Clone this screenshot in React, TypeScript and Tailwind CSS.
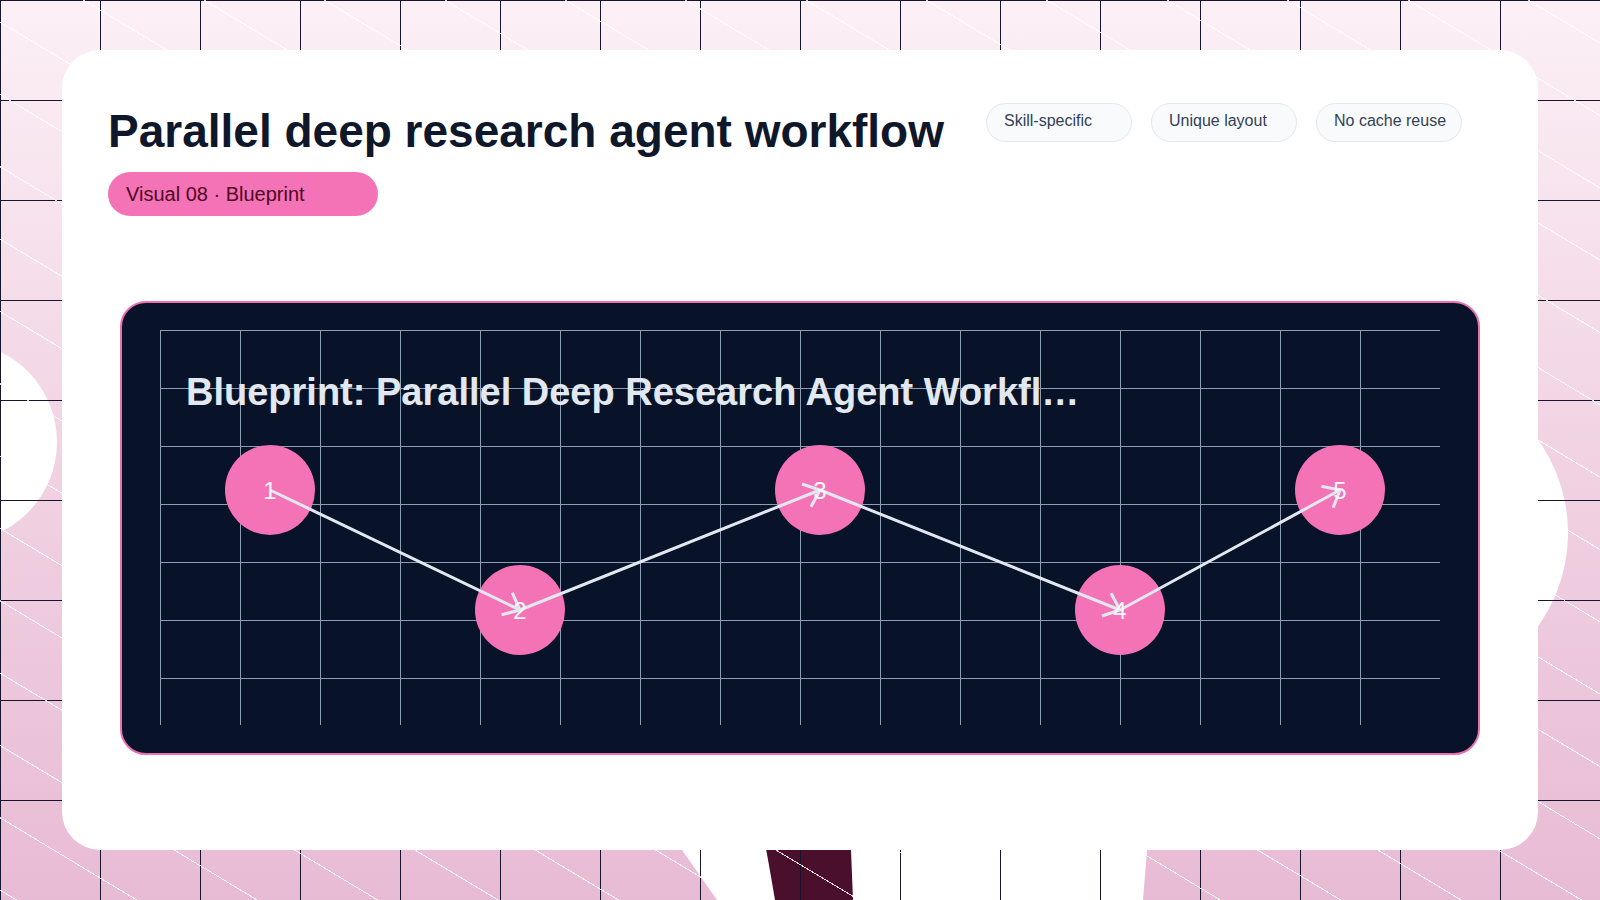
const TAGS = ['Skill-specific', 'Unique layout', 'No cache reuse']

type Node = { id: number; x: number; y: number }

const NODES: Node[] = [
  { id: 1, x: 110, y: 160 },
  { id: 2, x: 360, y: 280 },
  { id: 3, x: 660, y: 160 },
  { id: 4, x: 960, y: 280 },
  { id: 5, x: 1180, y: 160 }
]

const GRID_W = 1280
const GRID_H = 395

/**
 * Open chevron at the end of an edge, tip sits on the target centre
 */
function arrowPoints(from: Node, to: Node): string {
  const back = Math.atan2(to.y - from.y, to.x - from.x) + Math.PI
  const len = 19
  const spread = 0.7
  const a = [to.x + len * Math.cos(back + spread), to.y + len * Math.sin(back + spread)]
  const b = [to.x + len * Math.cos(back - spread), to.y + len * Math.sin(back - spread)]
  return `${a[0]},${a[1]} ${to.x},${to.y} ${b[0]},${b[1]}`
}

function Blueprint() {
  const cols = Array.from({ length: GRID_W / 80 + 1 }, (_, i) => i * 80)
  const rows = Array.from({ length: 7 }, (_, i) => i * 58)

  return (
    <svg width={GRID_W} height={GRID_H} viewBox={`0 0 ${GRID_W} ${GRID_H}`} className="block">
      {/* blueprint grid */}
      <g stroke="#8e9db6" strokeWidth="1">
        {cols.map((x) => (
          <line key={`c${x}`} x1={x + 0.5} y1={0} x2={x + 0.5} y2={GRID_H} />
        ))}
        {rows.map((y) => (
          <line key={`r${y}`} x1={0} y1={y + 0.5} x2={GRID_W} y2={y + 0.5} />
        ))}
      </g>

      <text
        x={26}
        y={75}
        fill="#e2e8f0"
        fontSize="38"
        fontWeight="700"
        fontFamily="'Liberation Sans', Arial, sans-serif"
      >
        Blueprint: Parallel Deep Research Agent Workfl…
      </text>

      {NODES.map((n) => (
        <circle key={`n${n.id}`} cx={n.x} cy={n.y} r={45} fill="#f472b6" />
      ))}

      {/* edges */}
      <g stroke="#e2e8f0" strokeWidth="3" fill="none">
        {NODES.slice(1).map((to, i) => {
          const from = NODES[i]
          return (
            <g key={`e${to.id}`}>
              <line x1={from.x} y1={from.y} x2={to.x} y2={to.y} />
              <polyline points={arrowPoints(from, to)} />
            </g>
          )
        })}
      </g>

      {NODES.map((n) => (
        <text
          key={`t${n.id}`}
          x={n.x}
          y={n.y}
          fill="#f8fafc"
          fontSize="24"
          textAnchor="middle"
          dominantBaseline="central"
          fontFamily="'Liberation Sans', Arial, sans-serif"
        >
          {n.id}
        </text>
      ))}
    </svg>
  )
}

function Backdrop() {
  return (
    <>
      {/* soft shapes behind the card */}
      <svg className="absolute inset-0 h-full w-full" viewBox="0 0 1600 900" preserveAspectRatio="none">
        <circle cx={-43} cy={442} r={100} fill="#ffffff" />
        <circle cx={1408} cy={533} r={160} fill="#ffffff" />
        <polygon points="612,750 717,900 1143,900 1155,750" fill="#ffffff" />
        <path d="M757,800 Q768,858 775,900 L853,900 L849,800 Z" fill="#4a0f2b" />
      </svg>

      {/* dark grid */}
      <div className="absolute inset-0 bg-[linear-gradient(to_right,#17142e_1px,transparent_1px),linear-gradient(to_bottom,#17142e_1px,transparent_1px)] bg-[size:100px_100px]" />

      {/* diagonal hairlines */}
      <div className="absolute inset-0 bg-[repeating-linear-gradient(31deg,transparent_0px,transparent_8px,rgba(255,255,255,0.85)_8px,rgba(255,255,255,0.85)_9px,transparent_9px,transparent_62px)]" />
    </>
  )
}

export default function App() {
  return (
    <div className="relative h-[900px] w-full overflow-hidden bg-[linear-gradient(180deg,#fcf0f6_0%,#f1d3e3_50%,#e8bbd4_100%)] font-['Liberation_Sans',Arial,sans-serif]">
      <Backdrop />

      <div className="relative mx-[62px] mt-[50px] h-[800px] rounded-[38px] bg-white px-[46px] pt-[54px]">
        {/* Header */}
        <div className="flex items-start gap-[42px]">
          <div>
            <h1 className="whitespace-nowrap text-[46px] font-bold leading-[1.2] text-[#0f172a]">
              Parallel deep research agent workflow
            </h1>
            <div className="mt-[13px] flex h-[44px] w-[270px] items-center rounded-full bg-[#f472b6] pl-[18px] text-[20px] text-[#500724]">
              Visual 08 · Blueprint
            </div>
          </div>

          <div className="-mt-px flex gap-[19px]">
            {TAGS.map((tag) => (
              <span
                key={tag}
                className="flex h-[39px] w-[146px] items-center rounded-full border border-[#e2e8f0] bg-[#f8fafc] pb-[3px] pl-[17px] text-[16px] text-[#334155]"
              >
                {tag}
              </span>
            ))}
          </div>
        </div>

        {/* Blueprint panel */}
        <div className="mx-[12px] mt-[85px] h-[454px] rounded-[26px] border-2 border-[#ec6fae] bg-[#081329] pl-[38px] pt-[27px]">
          <Blueprint />
        </div>
      </div>
    </div>
  )
}
